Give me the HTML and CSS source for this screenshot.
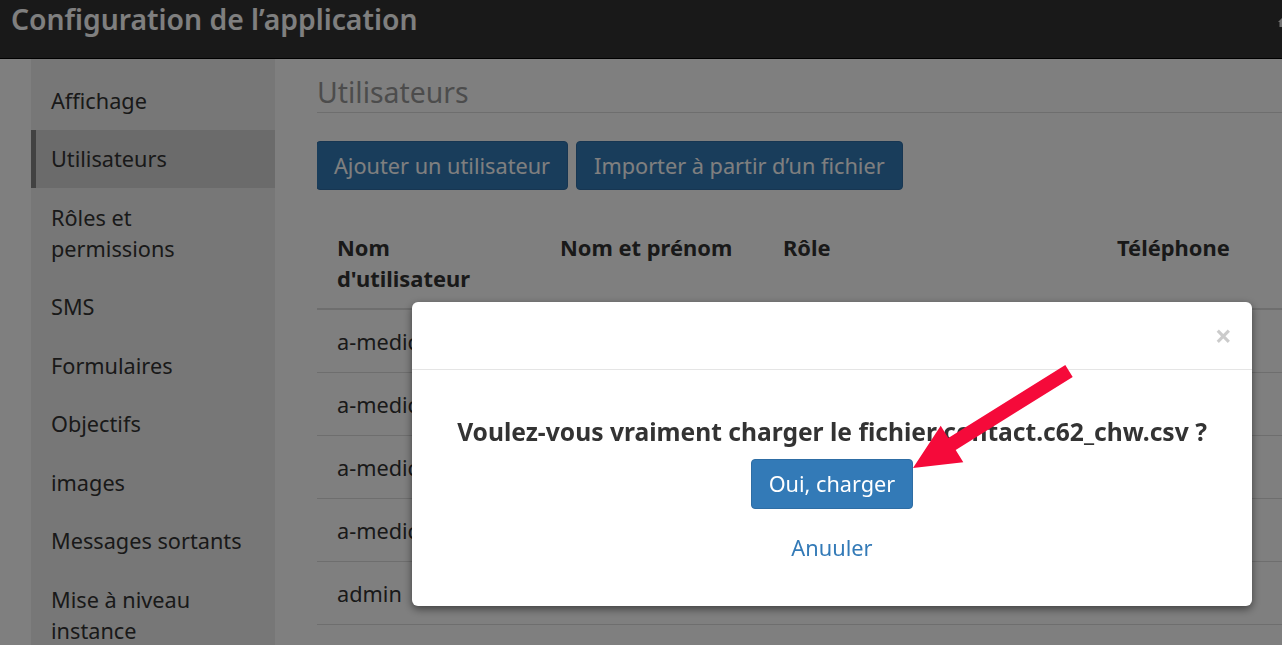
FILE: index.html
```html
<!DOCTYPE html>
<html lang="fr">
<head>
<meta charset="utf-8">
<title>Configuration de l’application</title>
<link rel="stylesheet" href="styles.css">
</head>
<body>
<header class="topbar">
  <h1 class="app-title">Configuration de l’application</h1>
  <span class="top-icon">
    <svg width="12" height="12" viewBox="0 0 12 12"><path d="M6 1 L11 6 L9.5 6 L9.5 11 L2.5 11 L2.5 6 L1 6 Z" fill="#dddddd"/></svg>
  </span>
</header>
<div class="layout">
  <nav class="sidebar">
    <a class="nav-item">Affichage</a>
    <a class="nav-item active">Utilisateurs</a>
    <a class="nav-item">Rôles et<br>permissions</a>
    <a class="nav-item">SMS</a>
    <a class="nav-item">Formulaires</a>
    <a class="nav-item">Objectifs</a>
    <a class="nav-item">images</a>
    <a class="nav-item">Messages sortants</a>
    <a class="nav-item">Mise à niveau<br>instance</a>
  </nav>
  <main class="content">
    <h2 class="page-title">Utilisateurs</h2>
    <div class="actions">
      <button class="btn btn-primary">Ajouter un utilisateur</button>
      <button class="btn btn-primary">Importer à partir d’un fichier</button>
    </div>
    <table class="users">
      <colgroup>
        <col class="c1"><col class="c2"><col class="c3"><col class="c4">
      </colgroup>
      <thead>
        <tr><th>Nom<br>d'utilisateur</th><th>Nom et prénom</th><th>Rôle</th><th>Téléphone</th></tr>
      </thead>
      <tbody>
        <tr><td>a-medic</td><td></td><td></td><td></td></tr>
        <tr><td>a-medic</td><td></td><td></td><td></td></tr>
        <tr><td>a-medic</td><td></td><td></td><td></td></tr>
        <tr><td>a-medic</td><td></td><td></td><td></td></tr>
        <tr><td>admin</td><td></td><td></td><td></td></tr>
        <tr><td>&nbsp;</td><td></td><td></td><td></td></tr>
      </tbody>
    </table>
  </main>
</div>
<div class="backdrop"></div>
<div class="modal-wrap">
  <div class="modal">
    <div class="modal-header">
      <button class="close">×</button>
    </div>
    <div class="modal-body">
      <p class="question">Voulez-vous vraiment charger le fichier contact.c62_chw.csv ?</p>
      <button class="btn btn-primary btn-confirm">Oui, charger</button>
      <a class="cancel">Anuuler</a>
    </div>
  </div>
</div>
<svg class="annotation" width="1282" height="645" viewBox="0 0 1282 645">
  <polygon points="1065.3,365.1 1072.7,376.9 955.7,449.9 963.3,462.2 913,468 940.7,425.8 948.3,438.1" fill="#f50a3a"/>
</svg>
</body>
</html>
```
FILE: styles.css
```css
html, body {
  margin: 0;
  padding: 0;
  height: 100%;
  overflow: hidden;
}
body {
  font-family: "Noto Sans", "Open Sans", sans-serif;
  color: #333;
  background: #fff;
}
.topbar {
  height: 58px;
  background: #333;
  border-bottom: 1px solid #000;
  display: flex;
  align-items: flex-start;
  justify-content: space-between;
  overflow: hidden;
}
.app-title {
  margin: 0;
  padding: 1px 0 0 11px;
  font-size: 28.3px;
  line-height: 36px;
  font-weight: 600;
  color: #fff;
}
.top-icon {
  margin-top: 11px;
  margin-right: -7px;
  display: block;
  width: 12px;
  height: 12px;
}
.layout {
  display: flex;
  height: calc(100% - 59px);
}
.sidebar {
  margin-left: 31px;
  width: 244px;
  flex: none;
  background: #eee;
  padding-top: 12px;
  display: flex;
  flex-direction: column;
}
.nav-item {
  display: block;
  padding: 13.75px 20px 13.75px 15px;
  font-size: 21.7px;
  line-height: 31px;
  color: #333;
  border-left: 5px solid transparent;
}
.nav-item.active {
  background: #d6d6d6;
  border-left-color: #848484;
}
.content {
  flex: 1;
  min-width: 0;
  margin-left: 42px;
  overflow: hidden;
}
.page-title {
  margin: 0;
  padding: 16px 0 3px;
  font-size: 28.4px;
  line-height: 34px;
  font-weight: 400;
  color: #999;
  border-bottom: 1px solid #ddd;
}
.actions {
  display: flex;
  gap: 8px;
  margin-top: 28px;
  margin-left: -1px;
}
.btn {
  font-family: inherit;
  font-size: 21.7px;
  line-height: 27px;
  padding: 10px 17px;
  border-radius: 4px;
  border: 1px solid #2e6da4;
  cursor: pointer;
}
.btn-primary {
  background: #337ab7;
  color: #fff;
}
.users {
  margin-top: 26px;
  border-collapse: collapse;
  table-layout: fixed;
  width: 1000px;
}
.c1, .c2 { width: 223px; }
.c3 { width: 334px; }
.c4 { width: 220px; }
.users th {
  text-align: left;
  font-size: 21.9px;
  line-height: 31px;
  font-weight: 700;
  padding: 16px 20px 14px;
  vertical-align: top;
  border-bottom: 2px solid #ddd;
}
.users td {
  font-size: 21.7px;
  line-height: 31px;
  padding: 16px 20px 15px;
  border-bottom: 1px solid #ddd;
  white-space: nowrap;
}
.backdrop {
  position: fixed;
  inset: 0;
  background: rgba(0, 0, 0, 0.5);
}
.modal-wrap {
  position: fixed;
  inset: 0;
}
.modal {
  margin: 302px 0 0 412px;
  width: 840px;
  background: #fff;
  border-radius: 6px;
  box-shadow: 0 3px 9px rgba(0, 0, 0, 0.5);
}
.modal-header {
  height: 67px;
  border-bottom: 1px solid #e5e5e5;
  display: flex;
  justify-content: flex-end;
  align-items: flex-start;
  padding: 0 20px 0 0;
}
.close {
  margin-top: 18px;
  background: none;
  border: 0;
  padding: 0;
  font-family: inherit;
  font-size: 30px;
  line-height: 32px;
  font-weight: 700;
  color: #000;
  opacity: 0.2;
}
.modal-body {
  display: flex;
  flex-direction: column;
  align-items: center;
  padding: 46px 20px 42px;
}
.question {
  margin: 0;
  font-size: 24.6px;
  line-height: 32px;
  font-weight: 700;
  color: #333;
}
.btn-confirm {
  margin-top: 11px;
  padding: 10px 17px;
  line-height: 28px;
}
.cancel {
  margin-top: 23px;
  font-size: 21.8px;
  line-height: 32px;
  color: #337ab7;
}
.annotation {
  position: fixed;
  left: 0;
  top: 0;
  pointer-events: none;
}
```
